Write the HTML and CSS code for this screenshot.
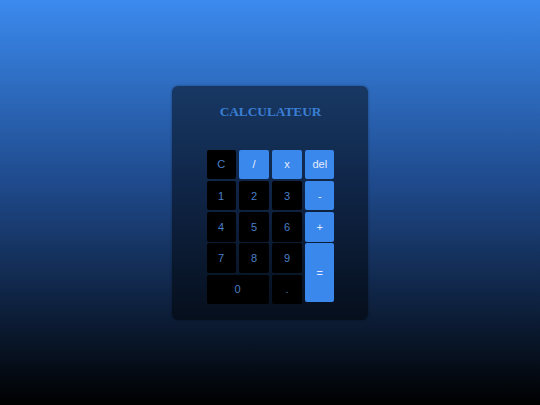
FILE: index.html
```html
<!DOCTYPE html>
<html lang="fr">
<head>
<meta charset="utf-8">
<title>Calculateur</title>
<link rel="stylesheet" href="styles.css">
</head>
<body>
<main class="calc">
  <h1 class="title">CALCULATEUR</h1>
  <div class="keys">
    <button class="key num">C</button>
    <button class="key op">/</button>
    <button class="key op">x</button>
    <button class="key op">del</button>
    <button class="key num">1</button>
    <button class="key num">2</button>
    <button class="key num">3</button>
    <button class="key op">-</button>
    <button class="key num">4</button>
    <button class="key num">5</button>
    <button class="key num">6</button>
    <button class="key op">+</button>
    <button class="key num">7</button>
    <button class="key num">8</button>
    <button class="key num">9</button>
    <button class="key op equals">=</button>
    <button class="key num zero">0</button>
    <button class="key num">.</button>
  </div>
</main>
</body>
</html>
```

FILE: styles.css
```css
html, body {
  margin: 0;
  padding: 0;
}
body {
  width: 540px;
  height: 405px;
  background: linear-gradient(to bottom, #3b8aee 0%, #1f4a8c 45%, #000 100%);
  display: flex;
  align-items: center;
  justify-content: center;
  font-family: "Liberation Sans", Arial, sans-serif;
  overflow: hidden;
}
.calc {
  box-sizing: border-box;
  width: 196px;
  height: 234px;
  margin-top: 0;
  padding: 18px 0 0 1px;
  background: rgba(0, 0, 0, 0.48);
  border-radius: 6px;
  box-shadow: 0 0 3px rgba(0, 0, 0, 0.35);
  display: flex;
  flex-direction: column;
  align-items: center;
}
.title {
  margin: 0;
  font-family: "Liberation Serif", "Times New Roman", serif;
  font-weight: bold;
  font-size: 13.3px;
  line-height: 16px;
  color: #3b7fd4;
}
.keys {
  margin-top: 30px;
  display: grid;
  grid-template-columns: repeat(4, 29.3px);
  grid-template-rows: repeat(5, 29.7px);
  column-gap: 3.6px;
  row-gap: 1.6px;
}
.key {
  border: none;
  border-radius: 2px;
  padding: 0;
  margin: 0;
  font-family: "Liberation Sans", Arial, sans-serif;
  font-size: 11px;
  display: flex;
  align-items: center;
  justify-content: center;
}
.num {
  background: #000;
  color: #4a7fc6;
}
.op {
  background: #3b88ec;
  color: #e4edff;
}
.equals {
  grid-column: 4;
  grid-row: 4 / span 2;
  margin-bottom: 2px;
}
.zero {
  grid-column: 1 / span 2;
}
```
